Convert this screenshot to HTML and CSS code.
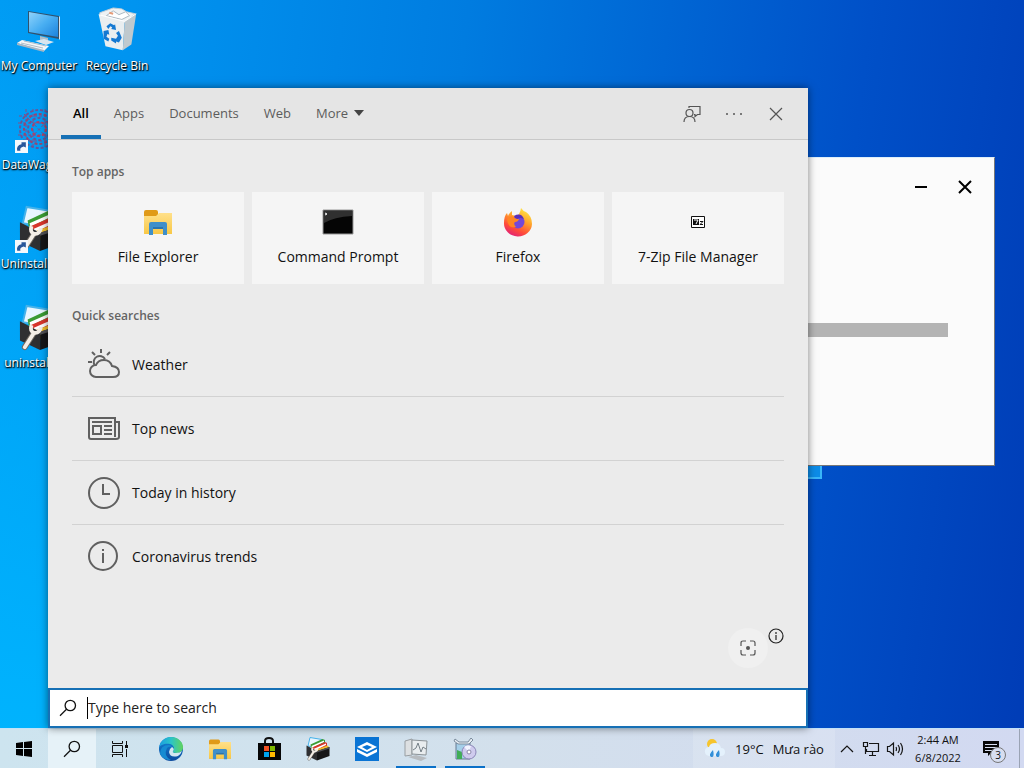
FILE: index.html
```
<!DOCTYPE html>
<html lang="en">

<head>
    <meta charset="UTF-8">
    <meta name="viewport" content="width=device-width, initial-scale=1.0">
    <title>Search</title>
    <link rel="stylesheet" href="styles.css">
</head>

<body>
    <!-- shared icons -->
    <svg class="sprite" aria-hidden="true">
        <defs>
            <linearGradient id="screen" x1="0" y1="0" x2="1" y2="1">
                <stop offset="0" stop-color="#8fd3fb" />
                <stop offset=".5" stop-color="#48aef2" />
                <stop offset="1" stop-color="#1c82dc" />
            </linearGradient>
            <linearGradient id="folder" x1="0" y1="0" x2="0" y2="1">
                <stop offset="0" stop-color="#ffe08a" />
                <stop offset="1" stop-color="#f8c846" />
            </linearGradient>
            <linearGradient id="fox" x1=".8" y1="0" x2=".3" y2="1">
                <stop offset="0" stop-color="#fff04a" />
                <stop offset=".4" stop-color="#ffa22a" />
                <stop offset=".75" stop-color="#ff4a3a" />
                <stop offset="1" stop-color="#e0207a" />
            </linearGradient>
            <linearGradient id="edge-a" x1="0" y1="0" x2="1" y2="0">
                <stop offset="0" stop-color="#1b9de2" />
                <stop offset=".5" stop-color="#2bc4c8" />
                <stop offset="1" stop-color="#62d45c" />
            </linearGradient>
            <linearGradient id="edge-b" x1="0" y1="0" x2="0" y2="1">
                <stop offset="0" stop-color="#1486d8" />
                <stop offset="1" stop-color="#0c4a9e" />
            </linearGradient>
        </defs>
        <symbol id="i-folder" viewBox="0 0 28 26">
            <path d="M0 3q0-2 2-2h10q2 0 2 2v2h14v20H0z" fill="#e09a18" />
            <path d="M0 7h12l3-3h13v21H0z" fill="url(#folder)" />
            <path d="M5 26V15q0-2 2-2h14q2 0 2 2v11h-4v-8H9v8z" fill="#3f8fc9" />
            <path d="M9 18h10v2H9z" fill="#2b74ac" />
        </symbol>
        <symbol id="i-box" viewBox="0 0 48 48">
            <path d="M8 1l24 4-3 17-25-4z" fill="#e8f6ff" stroke="#46b2ea" stroke-width="2" />
            <path d="M9 15L33 4l5 2v8L11 26z" fill="#3a9c34" />
            <path d="M11 18l25-11v3L12 22z" fill="#fff" />
            <path d="M12 21L38 10l4 2v8L16 30z" fill="#d8352c" />
            <path d="M15 24l25-11v3L16 28z" fill="#fff" />
            <path d="M18 26l25-9 3 3v9L22 36z" fill="#f2c12c" />
            <path d="M1 17l21 11v19L1 37z" fill="#2f2f31" />
            <path d="M22 28l25-8v18L22 47z" fill="#161617" />
            <path d="M22 28l25-8v3l-25 8z" fill="#515154" />
            <path d="M6 44l9-14" stroke="#6f6962" stroke-width="6" stroke-linecap="round" />
            <path d="M6 44l9-14" stroke="#f4eee6" stroke-width="4" stroke-linecap="round" />
            <path d="M13 21q-2 7 3 8 5 1 7-6" fill="none" stroke="#f4eee6" stroke-width="4" />
        </symbol>
        <symbol id="i-search" viewBox="0 0 18 18">
            <g fill="none" stroke="currentColor" stroke-width="1.3">
                <circle cx="11.3" cy="6.5" r="5.2" />
                <path d="M7.5 10.2L1 16.8" />
            </g>
        </symbol>
        <symbol id="i-link" viewBox="0 0 12 12">
            <path d="M0 0h12v12H0z" fill="#f4f8fc" />
            <path d="M2 10q-1-5 4-6V2h4v5L8 6Q4 7 5 10z" fill="#28579b" />
        </symbol>
    </svg>

    <main class="desktop">
        <div class="shortcuts">
            <a class="shortcut" href="#">
                <svg width="48" height="48" viewBox="0 0 48 48">
                    <path d="M13 4l31 5v23l-31-6z" fill="#31516c" />
                    <path d="M14 5l29 5v20l-29-5z" fill="url(#screen)" />
                    <path d="M44 9l1 1v23l-1-1z" fill="#d8e4ec" />
                    <path d="M25 29l8 2v5l-8-2z" fill="#aebdc9" />
                    <path d="M20 34l9-2 10 3-8 3z" fill="#d9e5ee" />
                    <path d="M2 36l5-3 27 6-5 5z" fill="#f4f6f8" />
                    <path d="M2 36l27 7v2L2 38z" fill="#a8b6c2" />
                    <path d="M6 36l22 5M9 34l22 5" stroke="#b1bdc8" />
                </svg>
                <span>My Computer</span>
            </a>
            <a class="shortcut" href="#">
                <svg width="48" height="48" viewBox="0 0 50 50">
                    <path d="M7 6l14-5 9 1 5 3 9 2-11 9L8 13z" fill="#eef2f4" stroke="#c2cdd4" />
                    <path d="M14 9l7-5 6 4 7-3 4 4-8 4z" fill="#fff" stroke="#a9b7c0" />
                    <path d="M17 6l4 1" stroke="#e69c78" stroke-width="2" />
                    <path d="M6 8l27 7-2 30-18-4z" fill="#e9eef0" />
                    <path d="M33 15l12-8-5 32-9 6z" fill="#bfc9ce" />
                    <path d="M6 8l27 7 12-8" fill="none" stroke="#fff" />
                    <g fill="#1479d2">
                        <path d="M14 20l4-3 4 2 1-1 1 6-5-1 1-2-2-1-2 3z" />
                        <path d="M11 25l5-1 1 5-2-1-1 3 3 2-1 3-5-3z" />
                        <path d="M19 32l5 1 2-3-2-3 3-2 3 7-3 5-3-1v2l-5-3z" />
                    </g>
                </svg>
                <span>Recycle Bin</span>
            </a>
            <a class="shortcut" href="#">
                <svg width="48" height="48" viewBox="0 0 48 48">
                    <g fill="none" stroke="#99446f" stroke-width="2" stroke-dasharray="3 2">
                        <circle cx="24" cy="23" r="19" stroke="#66569a" />
                        <circle cx="24" cy="23" r="15" />
                        <circle cx="24" cy="23" r="11" stroke="#66569a" />
                        <circle cx="24" cy="23" r="7" stroke="#b93e60" />
                        <path d="M4 10h38M3 17h40M3 29h40M4 35h38M11 3v40M18 3v40M30 3v40M36 3v40M9 8l30 31M39 8L9 39" stroke="#884c83" stroke-width="1" />
                    </g>
                    <use href="#i-link" y="34" width="13" height="13" />
                </svg>
                <span>DataWagon...</span>
            </a>
            <a class="shortcut" href="#">
                <svg width="48" height="48" viewBox="0 0 48 48">
                    <use href="#i-box" x="4" width="46" height="48" />
                    <use href="#i-link" y="35" width="13" height="13" />
                </svg>
                <span>Uninstall Tool</span>
            </a>
            <a class="shortcut" href="#">
                <svg width="48" height="48" viewBox="0 0 48 48">
                    <use href="#i-box" x="4" width="46" height="48" />
                </svg>
                <span>uninstalltool</span>
            </a>
        </div>

        <div class="logo-pane"></div>

        <section class="installer">
            <div class="installer-bar">
                <button type="button" aria-label="Minimize"><svg width="14" height="14" viewBox="0 0 14 14"><path d="M1 7h12" /></svg></button>
                <button type="button" aria-label="Close"><svg width="14" height="14" viewBox="0 0 14 14"><path d="M1 1l12 12M13 1L1 13" /></svg></button>
            </div>
            <div class="installer-progress"></div>
        </section>

        <section class="search">
            <header class="search-head">
                <nav class="tabs">
                    <button class="tab active" type="button">All</button>
                    <button class="tab" type="button">Apps</button>
                    <button class="tab" type="button">Documents</button>
                    <button class="tab" type="button">Web</button>
                    <button class="tab" type="button">More <svg width="10" height="6" viewBox="0 0 10 6"><path d="M0 0h10L5 6z" fill="#444" /></svg></button>
                </nav>
                <div class="tools">
                    <button type="button" aria-label="Feedback">
                        <svg width="18" height="18" viewBox="0 0 18 18">
                            <circle cx="6.500" cy="8" r="3.500" />
                            <path d="M1 17q0-5.500 5.500-5.500T12 17M6 3V1.500h11v8h-2.500l-2.500 2V9.500h-1" />
                        </svg>
                    </button>
                    <button type="button" aria-label="Options">
                        <svg width="18" height="18" viewBox="0 0 18 18">
                            <g fill="#555" stroke="none"><circle cx="2" cy="9" r="1" /><circle cx="9" cy="9" r="1" /><circle cx="16" cy="9" r="1" /></g>
                        </svg>
                    </button>
                    <button type="button" aria-label="Close search">
                        <svg width="18" height="18" viewBox="0 0 18 18"><path d="M3 3l12 12M15 3L3 15" /></svg>
                    </button>
                </div>
            </header>

            <div class="search-body">
                <h2>Top apps</h2>
                <div class="apps">
                    <button class="app" type="button">
                        <svg width="32" height="32" viewBox="0 0 32 32"><use href="#i-folder" x="2" y="3" width="28" height="26" /></svg>
                        <span>File Explorer</span>
                    </button>
                    <button class="app" type="button">
                        <svg width="32" height="32" viewBox="0 0 32 32">
                            <path d="M1 4h30v24H1z" fill="#050505" stroke="#999" />
                            <path d="M2 5h28v5Q12 11 2 17z" fill="#303030" />
                            <path d="M3 7l2 1-2 1" fill="none" stroke="#fff" />
                        </svg>
                        <span>Command Prompt</span>
                    </button>
                    <button class="app" type="button">
                        <svg width="32" height="32" viewBox="0 0 32 32">
                            <path d="M19 2q2 3 5 4 6 4 6 12a14 13 0 0 1-28-1q0-7 3-10l1 3q1-3 4-5v4l4 1q4-1 5-8z" fill="url(#fox)" />
                            <circle cx="16" cy="16" r="6.500" fill="#7448d8" />
                            <path d="M12 10q7-4 10 3l-3-1q-5 0-4 3z" fill="#5a30b8" />
                            <path d="M5 13q3-4 7-2 1 2 5 2-1 3-4 3-2 2 1 5-8 2-9-8z" fill="#ff8522" />
                        </svg>
                        <span>Firefox</span>
                    </button>
                    <button class="app" type="button">
                        <svg width="32" height="32" viewBox="0 0 32 32">
                            <path d="M9.500 10.500h13v11h-13z" fill="#fff" stroke="#111" />
                            <path d="M11 13h6v6h-6z" fill="#111" />
                            <path d="M12 14h4l-2 4" fill="none" stroke="#fff" />
                            <path d="M18 15.500h3l-3 3h3" fill="none" stroke="#111" />
                        </svg>
                        <span>7-Zip File Manager</span>
                    </button>
                </div>

                <h2>Quick searches</h2>
                <ul class="quick">
                    <li>
                        <a href="#">
                            <svg width="32" height="32" viewBox="0 0 32 32">
                                <path d="M8 28a6 6 0 0 1 0-12q2-5 8-5 6 0 8 6 7 1 7 6 0 5-6 5z" />
                                <path d="M6.500 16A6 6 0 0 1 17 10M13 0v4M4 3l3 3M22 3l-3 3M0 13h4" />
                            </svg>
                            Weather
                        </a>
                    </li>
                    <li>
                        <a href="#">
                            <svg width="32" height="32" viewBox="0 0 32 32">
                                <path d="M27 24V5H1v19q0 2 2 2h25q3 0 3-2V9h-4" />
                                <path d="M4 9h20M5 13h8v8H5zM16 13h8M16 17h8M16 21h8" />
                            </svg>
                            Top news
                        </a>
                    </li>
                    <li>
                        <a href="#">
                            <svg width="32" height="32" viewBox="0 0 32 32">
                                <circle cx="16" cy="16" r="15" />
                                <path d="M15 7v10h7" />
                            </svg>
                            Today in history
                        </a>
                    </li>
                    <li>
                        <a href="#">
                            <svg width="32" height="32" viewBox="0 0 32 32">
                                <circle cx="15" cy="15" r="14" />
                                <path d="M15 12v10M15 8v2" />
                            </svg>
                            Coronavirus trends
                        </a>
                    </li>
                </ul>

                <div class="lens">
                    <button class="lens-btn" type="button" aria-label="Screenshot search">
                        <svg width="16" height="16" viewBox="0 0 16 16">
                            <path d="M1 6V3q0-2 2-2h3M10 1h3q2 0 2 2v3M15 10v3q0 2-2 2h-3M6 15H3q-2 0-2-2v-3" />
                            <circle cx="8" cy="8" r="2" fill="#555" stroke="none" />
                        </svg>
                    </button>
                    <button class="lens-info" type="button" aria-label="Info">
                        <svg width="16" height="16" viewBox="0 0 16 16">
                            <circle cx="8" cy="8" r="7" />
                            <path d="M8 7v5M8 4v2" />
                        </svg>
                    </button>
                </div>
            </div>

            <label class="search-box">
                <svg width="18" height="18"><use href="#i-search" /></svg>
                <input type="text" placeholder="Type here to search" aria-label="Search">
            </label>
        </section>
    </main>

    <footer class="taskbar">
        <div class="task-buttons">
            <button type="button" aria-label="Start">
                <svg width="16" height="16" viewBox="0 0 16 16"><path d="M0 2l7-1v6H0zM8 1l8-1v7H8zM0 8h7v7l-7-1zM8 8h8v8l-8-1z" /></svg>
            </button>
            <button class="open" type="button" aria-label="Search">
                <svg width="18" height="18"><use href="#i-search" /></svg>
            </button>
            <button type="button" aria-label="Task view">
                <svg width="18" height="18" viewBox="0 0 18 18" fill="none" stroke="#111">
                    <path d="M1.500 1v2.500h10V1M1.500 17v-2.500h10V17M1.500 5.500h10v7h-10zM15.500 1v4M15.500 9v8" />
                    <path d="M14 5h3v3h-3z" fill="#111" stroke="none" />
                </svg>
            </button>
            <button type="button" aria-label="Edge">
                <svg width="24" height="24" viewBox="0 0 24 24">
                    <circle cx="12" cy="12" r="12" fill="url(#edge-b)" />
                    <path d="M0 11C1 4 6 0 12 0c7 0 12 5 12 10 0 4-3 6-7 6-3 0-4-1-3-2 2-2 1-6-3-7C6 6 1 8 0 11z" fill="url(#edge-a)" />
                    <path d="M14 14q-1 2 3 2 4 0 6-2-1 3-4 5-8 2-9-4 0-3 3-5 3 2 1 4z" fill="#d2e6f0" />
                    <path d="M8 11q-4 8 4 12-8 0-11-6 0-9 9-9 2 0 3 2-3-1-5 1z" fill="#168bd2" />
                </svg>
            </button>
            <button type="button" aria-label="File Explorer">
                <svg width="22" height="22"><use href="#i-folder" /></svg>
            </button>
            <button type="button" aria-label="Store">
                <svg width="24" height="24" viewBox="0 0 24 24">
                    <path d="M8 7V4q0-3 4-3t4 3v3" fill="none" stroke="#111" stroke-width="2" />
                    <path d="M1 6h23v17H1z" fill="#060606" />
                    <path d="M7 9h5v5H7z" fill="#f25022" /><path d="M13 9h5v5h-5z" fill="#7fba00" />
                    <path d="M7 15h5v5H7z" fill="#00a4ef" /><path d="M13 15h5v5h-5z" fill="#ffb900" />
                </svg>
            </button>
            <button type="button" aria-label="Uninstall Tool">
                <svg width="24" height="24"><use href="#i-box" /></svg>
            </button>
            <button type="button" aria-label="Sandbox">
                <svg width="24" height="24" viewBox="0 0 24 24">
                    <path d="M0 0h24v24H0z" fill="#0a74d4" />
                    <path d="M2 10l10-5 10 5-10 5z" fill="#fff" />
                    <path d="M2 12l10 5 10-5v3l-10 5-10-5z" fill="#fff" />
                    <path d="M7 10l5-2 5 2-5 3z" fill="#0a74d4" />
                </svg>
            </button>
            <button class="running" type="button" aria-label="Monitor">
                <svg width="24" height="24" viewBox="0 0 24 24">
                    <path d="M1 4l7-2v16l-7 1z" fill="#dde0e2" stroke="#999ea2" />
                    <path d="M8 3l15 1-1 14-14-1z" fill="#e9edef" stroke="#8b9296" />
                    <path d="M9 13l3-2 2-5 3 9 2-5 3 2" fill="none" stroke="#747f86" />
                    <path d="M4 20l8-2 11 3-6 3z" fill="#b7bbbf" />
                </svg>
            </button>
            <button class="running" type="button" aria-label="Setup">
                <svg width="24" height="24" viewBox="0 0 24 24">
                    <path d="M3 6h14v16H3z" fill="#a5cfe9" stroke="#667b91" />
                    <path d="M4 13l5 2v7H4z" fill="#40ad57" />
                    <path d="M2 2l4 3h9l3-4 2 2-4 4H5L1 4z" fill="#e8eef4" stroke="#7c8c9d" />
                    <circle cx="16" cy="15" r="7" fill="#cfcbee" stroke="#8b86b8" />
                    <path d="M16 15L11 10q3-3 7-1z" fill="#f1f4ff" />
                    <circle cx="16" cy="15" r="2" fill="#fff" stroke="#8886a8" />
                </svg>
            </button>
        </div>

        <div class="tray">
            <button class="weather" type="button">
                <svg width="22" height="22" viewBox="0 0 22 22">
                    <g stroke="none">
                        <circle cx="8" cy="6" r="5" fill="#f6c52e" />
                        <path d="M5 18q-5-1-4-6 1-3 4-3 1-4 6-4 5 0 6 5 4 0 4 4 0 4-4 4z" fill="#e4f1fc" />
                        <path d="M9 12q-5 5-2 7 4 1 2-7zM15 12q-5 5-2 7 4 1 2-7z" fill="#338fd8" />
                    </g>
                </svg>
                <span>19°C</span>
                <span>Mưa rào</span>
            </button>
            <button type="button" aria-label="Hidden icons">
                <svg width="14" height="14" viewBox="0 0 14 14"><path d="M1 10l6-6 6 6" /></svg>
            </button>
            <button type="button" aria-label="Network">
                <svg width="18" height="16" viewBox="0 0 18 16"><path d="M7 2.500h9.500v8H4.500V8M1.500 1.500h4v4h-4zM3.500 6v7M10.500 11v3M7 14.500h7" /></svg>
            </button>
            <button type="button" aria-label="Volume">
                <svg width="18" height="16" viewBox="0 0 18 16"><path d="M1.500 5.500h2L7.500 2v12l-4-3.500h-2zM10 6q1 2 0 4M12 4q3 4 0 8M14.500 2q4 6 0 12" /></svg>
            </button>
            <button class="clock" type="button">
                <span>2:44 AM</span>
                <span>6/8/2022</span>
            </button>
            <button class="notice" type="button" aria-label="Notifications">
                <svg width="18" height="18" viewBox="0 0 18 18">
                    <path d="M1 1h16v12H9l-3 3v-3H1z" fill="#080808" stroke="none" />
                    <path d="M3 4.500h12M3 7.500h12M3 10.500h7" stroke="#d7def0" />
                </svg>
                <span class="badge">3</span>
            </button>
            <button class="show-desktop" type="button" aria-label="Show desktop"></button>
        </div>
    </footer>
</body>

</html>
```

FILE: styles.css
```
* {
    box-sizing: border-box;
}

html,
body {
    height: 100%;
}

body {
    display: flex;
    flex-direction: column;
    margin: 0;
    overflow: hidden;
    font-family: "Open Sans", "Noto Sans", sans-serif;
    font-size: 14px;
    line-height: 22px;
    color: #111;
    background: linear-gradient(97deg, #009cf4 0%, #0094f0 12%, #007ce0 42%, #0050c8 78%, #003cb6 100%);
}

button {
    padding: 0;
    border: none;
    background: none;
    font: inherit;
    color: inherit;
}

a {
    color: inherit;
    text-decoration: none;
}

svg {
    display: block;
    flex-shrink: 0;
}

.sprite {
    position: absolute;
    width: 0;
    height: 0;
}

/* desktop */
.desktop {
    position: relative;
    flex: 1;
    min-height: 0;
    background: linear-gradient(to bottom, rgba(0, 182, 255, 0), rgba(0, 182, 255, .9)) left / 48px 100% no-repeat;
}

.shortcuts {
    display: grid;
    grid-template-columns: 78px 78px;
    grid-auto-rows: 99px;
}

.shortcut {
    display: flex;
    flex-direction: column;
    align-items: center;
    padding-top: 7px;
    font-size: 12px;
    line-height: 22px;
    color: #fff;
    white-space: nowrap;
    text-shadow: 0 1px 2px #000, 1px 1px 1px #000;
}

.shortcut:nth-child(n+3) {
    grid-column: 1;
}

.logo-pane {
    position: absolute;
    left: 700px;
    top: 380px;
    width: 122px;
    height: 99px;
    background: #0c8ce8;
    border: 2px solid #39b5f8;
}

.installer {
    position: absolute;
    top: 157px;
    right: 29px;
    width: 420px;
    height: 309px;
    background: #fbfbfb;
    border: 1px solid #777;
    border-top-color: #ddeefa;
}

.installer-bar {
    display: flex;
    justify-content: flex-end;
    gap: 20px;
    padding: 17px 17px 0 0;
}

.installer-bar button {
    width: 24px;
    height: 24px;
    display: grid;
    place-items: center;
}

.installer-bar path {
    stroke: #000;
    stroke-width: 2;
}

.installer-progress {
    height: 14px;
    margin: 124px 46px 0;
    background: #b4b4b4;
}

/* search window */
.search {
    position: absolute;
    top: 88px;
    bottom: 0;
    left: 48px;
    width: min(760px, calc(100% - 48px));
    display: flex;
    flex-direction: column;
    background: #ebebeb;
    box-shadow: 0 0 8px rgba(0, 0, 0, .5);
}

.search-head {
    display: flex;
    justify-content: space-between;
    height: 52px;
    padding: 0 11px 0 13px;
    background: #e5e5e5;
    border-bottom: 1px solid #c8c8c8;
}

.tabs,
.tools {
    display: flex;
}

.tab {
    display: flex;
    align-items: center;
    gap: 6px;
    padding: 3px 12px 0 13px;
    font-size: 13px;
    color: #5c5c5c;
    border-bottom: 4px solid transparent;
}

.tab.active {
    padding: 3px 12px 0;
    font-weight: 600;
    color: #000;
    border-bottom-color: #1670b5;
}

.tools button {
    width: 42px;
    display: grid;
    place-items: center;
}

.tools svg,
.lens svg {
    fill: none;
    stroke: #555;
    stroke-width: 1.2;
}

.search-body {
    flex: 1;
    display: flex;
    flex-direction: column;
    padding: 22px 24px 20px;
}

.search h2 {
    margin: 0;
    font-size: 12px;
    line-height: 20px;
    font-weight: 600;
    color: #646464;
}

.apps {
    display: grid;
    grid-template-columns: repeat(4, 1fr);
    gap: 8px;
    margin: 10px 0 22px;
}

.app {
    display: flex;
    flex-direction: column;
    align-items: center;
    gap: 8px;
    height: 92px;
    padding-top: 14px;
    background: #f5f5f5;
}

.quick {
    margin: 7px 0 0;
    padding: 0;
    list-style: none;
}

.quick li + li {
    border-top: 1px solid #d2d2d2;
}

.quick a {
    display: flex;
    align-items: center;
    gap: 12px;
    height: 63px;
    padding-left: 16px;
}

.quick svg {
    fill: none;
    stroke: #606060;
    stroke-width: 2;
}

.lens {
    display: flex;
    justify-content: flex-end;
    margin-top: auto;
}

.lens-btn {
    display: grid;
    place-items: center;
    width: 40px;
    height: 40px;
    border-radius: 50%;
    background: #f0f0f0;
}

.lens-info {
    align-self: flex-start;
}

.lens .lens-info svg {
    stroke: #222;
}

.search-box {
    display: flex;
    align-items: center;
    gap: 10px;
    height: 40px;
    padding: 0 9px;
    background: #fff;
    border: 2px solid #1670b5;
}

.search-box input {
    flex: 1;
    min-width: 0;
    padding: 0;
    border: none;
    outline: none;
    border-left: 1px solid #000;
    font: inherit;
}

.search-box input::placeholder {
    color: #222;
}

/* taskbar */
.taskbar {
    display: flex;
    justify-content: space-between;
    height: 40px;
    background: linear-gradient(to right, #cde4ef, #d3e0ec 50%, #d2d9f1);
    border-top: 1px solid #c2e2f8;
}

.task-buttons {
    display: flex;
}

.task-buttons button {
    display: grid;
    place-items: center;
    width: 49px;
}

.task-buttons button:nth-child(-n+3) {
    width: 48px;
}

.task-buttons button:nth-child(3) {
    margin-right: 2px;
}

.task-buttons .open {
    background: #e6f2f8;
}

.task-buttons .running {
    background: linear-gradient(#0a70c8, #0a70c8) center bottom / 40px 2px no-repeat;
}

.tray {
    display: flex;
}

.tray > button {
    display: flex;
    align-items: center;
    justify-content: center;
    width: 24px;
}

.tray svg {
    fill: none;
    stroke: #151515;
    stroke-width: 1.2;
}

.tray .weather {
    gap: 9px;
    width: 142px;
    font-size: 13px;
    background: rgba(255, 255, 255, .15);
    white-space: nowrap;
}

.tray .clock {
    flex-direction: column;
    width: 62px;
    font-size: 11px;
    line-height: 18px;
}

.tray .notice {
    position: relative;
    width: 50px;
    padding-right: 6px;
}

.badge {
    position: absolute;
    left: 21px;
    top: 18px;
    width: 16px;
    height: 16px;
    border: 1px solid #777;
    border-radius: 50%;
    background: #d7def0;
    font-size: 10px;
    line-height: 14px;
    text-align: center;
}

.tray .show-desktop {
    width: 5px;
    border-left: 1px solid #9aa3b4;
}
```
